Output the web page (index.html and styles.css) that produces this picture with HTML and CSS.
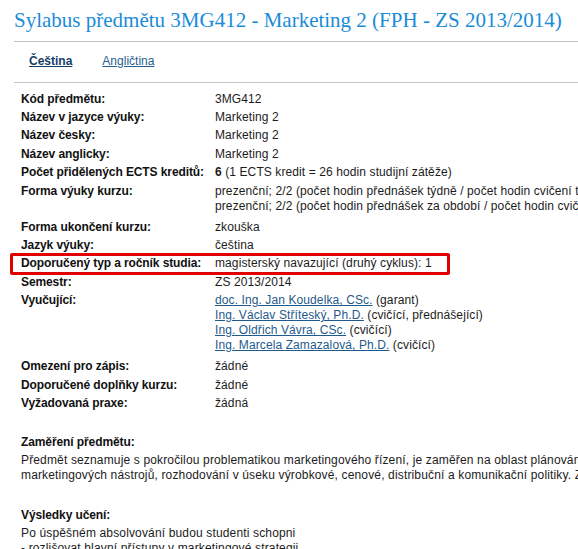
FILE: index.html
```html
<!DOCTYPE html>
<html lang="cs">
<head>
<meta charset="utf-8">
<title>Sylabus předmětu 3MG412</title>
<link rel="stylesheet" href="styles.css">
</head>
<body>
<div class="page">
  <header class="head">
    <h1 class="title">Sylabus předmětu 3MG412 - Marketing 2 (FPH - ZS 2013/2014)</h1>
  </header>
  <nav class="tabs">
    <a class="tab tab-active" href="#">Čeština</a>
    <a class="tab" href="#">Angličtina</a>
  </nav>
  <div class="details">
    <div class="row"><div class="label">Kód předmětu:</div><div class="value">3MG412</div></div>
    <div class="row"><div class="label">Název v jazyce výuky:</div><div class="value">Marketing 2</div></div>
    <div class="row"><div class="label">Název česky:</div><div class="value">Marketing 2</div></div>
    <div class="row"><div class="label">Název anglicky:</div><div class="value">Marketing 2</div></div>
    <div class="row"><div class="label">Počet přidělených ECTS kreditů:</div><div class="value"><b>6</b> (1 ECTS kredit = 26 hodin studijní zátěže)</div></div>
    <div class="row row-multi"><div class="label">Forma výuky kurzu:</div><div class="value">prezenční; 2/2 (počet hodin přednášek týdně / počet hodin cvičení týdně)<br>prezenční; 2/2 (počet hodin přednášek za období / počet hodin cvičení za období)</div></div>
    <div class="row"><div class="label">Forma ukončení kurzu:</div><div class="value">zkouška</div></div>
    <div class="row"><div class="label">Jazyk výuky:</div><div class="value">čeština</div></div>
    <div class="row row-marked"><div class="label">Doporučený typ a ročník studia:</div><div class="value">magisterský navazující (druhý cyklus): 1</div></div>
    <div class="row"><div class="label">Semestr:</div><div class="value">ZS 2013/2014</div></div>
    <div class="row row-multi"><div class="label">Vyučující:</div><div class="value"><a class="link" href="#">doc. Ing. Jan Koudelka, CSc.</a> (garant)<br><a class="link" href="#">Ing. Václav Stříteský, Ph.D.</a> (cvičící, přednášející)<br><a class="link" href="#">Ing. Oldřich Vávra, CSc.</a> (cvičící)<br><a class="link" href="#">Ing. Marcela Zamazalová, Ph.D.</a> (cvičící)</div></div>
    <div class="row"><div class="label">Omezení pro zápis:</div><div class="value">žádné</div></div>
    <div class="row"><div class="label">Doporučené doplňky kurzu:</div><div class="value">žádné</div></div>
    <div class="row"><div class="label">Vyžadovaná praxe:</div><div class="value">žádná</div></div>
  </div>
  <section class="section">
    <h2 class="section-title">Zaměření předmětu:</h2>
    <p class="section-text">Předmět seznamuje s pokročilou problematikou marketingového řízení, je zaměřen na oblast plánování a využívání<br>marketingových nástrojů, rozhodování v úseku výrobkové, cenové, distribuční a komunikační politiky. Základem je</p>
  </section>
  <section class="section">
    <h2 class="section-title">Výsledky učení:</h2>
    <p class="section-text">Po úspěšném absolvování budou studenti schopni<br>- rozlišovat hlavní přístupy v marketingové strategii</p>
  </section>
</div>
</body>
</html>
```

FILE: styles.css
```css
html, body {
  margin: 0;
  padding: 0;
  overflow: hidden;
  background: #ffffff;
}

body {
  font-family: "Liberation Sans", Arial, sans-serif;
  font-size: 12px;
  line-height: 15px;
  color: #1c1c1c;
}

.page {
  width: 578px;
  overflow: hidden;
}

.head {
  margin-left: 14px;
  padding-top: 6px;
  padding-bottom: 7px;
  border-bottom: 1px solid #c2c2c2;
}

.title {
  margin: 0;
  font-family: "Liberation Serif", "Times New Roman", serif;
  font-weight: normal;
  font-size: 21px;
  line-height: 28px;
  color: #1a8cd8;
  white-space: nowrap;
}

.tabs {
  margin-left: 14px;
  padding: 12px 0 13px 15px;
  border-bottom: 1px solid #c2c2c2;
  display: flex;
  gap: 30px;
}

.tab {
  color: #265f8f;
  text-decoration: underline;
}

.tab-active {
  color: #143d66;
  font-weight: bold;
}

.details {
  padding: 6.6px 0 0 21px;
}

.row {
  display: grid;
  grid-template-columns: 194px auto;
  padding: 2px 0 1.4px;
  white-space: nowrap;
}

.row-multi {
  padding-bottom: 4px;
}

.row-marked {
  position: relative;
}

.row-marked::after {
  content: "";
  position: absolute;
  left: -11px;
  top: -1.4px;
  width: 440px;
  height: 22px;
  box-sizing: border-box;
  border: 3px solid #e00000;
  border-radius: 2px;
}

.label {
  font-weight: bold;
  color: #111111;
  letter-spacing: -0.1px;
}

.value {
  letter-spacing: 0.1px;
}

.value b {
  font-weight: bold;
}

.link {
  color: #1f5a8c;
  text-decoration: underline;
}

.section {
  margin-top: 22.6px;
  padding-left: 21px;
}

.section + .section {
  margin-top: 25px;
}

.section-title {
  margin: 0;
  font-size: 12px;
  line-height: 15px;
  font-weight: bold;
  color: #111111;
  letter-spacing: -0.1px;
}

.section-text {
  margin: 3.3px 0 0;
  white-space: nowrap;
  letter-spacing: 0.15px;
}
```
